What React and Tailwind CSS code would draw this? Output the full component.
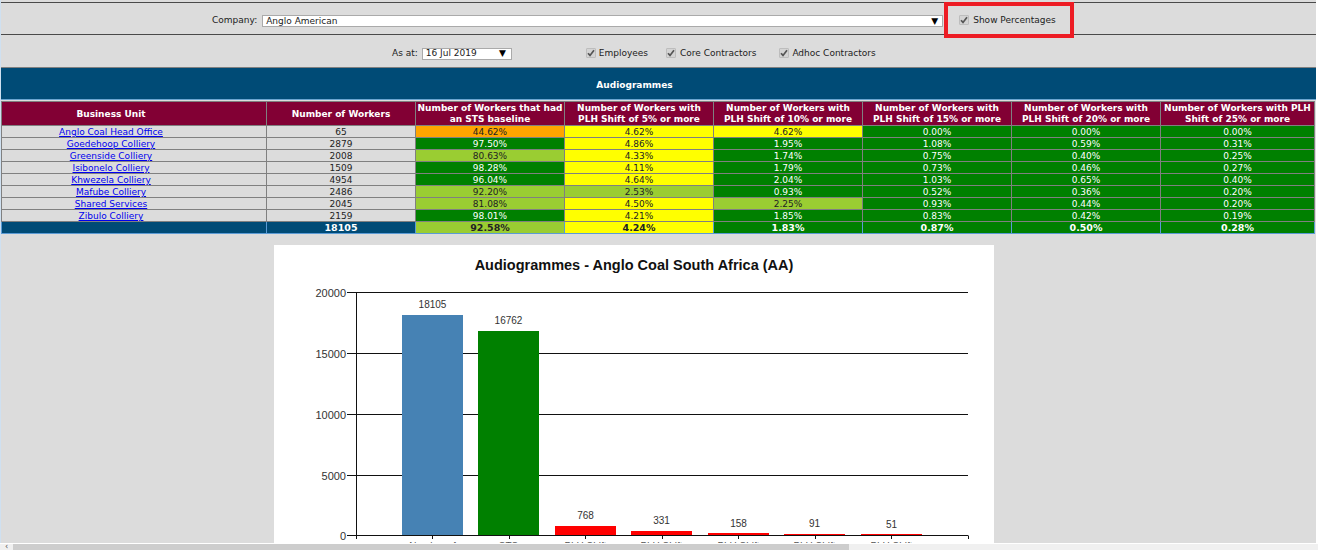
import React from 'react'

const GREEN = 'bg-[#008000] text-white'
const LIME = 'bg-[#9acd32] text-[#222]'
const YELLOW = 'bg-[#ffff00] text-[#222]'
const ORANGE = 'bg-[#ffa500] text-[#222]'

const headers = [
  { text: 'Business Unit', pad: 'pr-[46px]' },
  { text: 'Number of Workers', pad: '' },
  { text: 'Number of Workers that had an STS baseline', pad: '' },
  { text: 'Number of Workers with PLH Shift of 5% or more', pad: 'px-[6px]' },
  { text: 'Number of Workers with PLH Shift of 10% or more', pad: 'px-[6px]' },
  { text: 'Number of Workers with PLH Shift of 15% or more', pad: 'px-[6px]' },
  { text: 'Number of Workers with PLH Shift of 20% or more', pad: 'px-[6px]' },
  { text: 'Number of Workers with PLH Shift of 25% or more', pad: '' },
]

const colWidths = ['w-[265px]', 'w-[149px]', 'w-[149px]', 'w-[149px]', 'w-[149px]', 'w-[149px]', 'w-[149px]', 'w-[154px]']

const rows = [
  ['Anglo Coal Head Office', '65', ['44.62%', ORANGE], ['4.62%', YELLOW], ['4.62%', YELLOW], ['0.00%', GREEN], ['0.00%', GREEN], ['0.00%', GREEN]],
  ['Goedehoop Colliery', '2879', ['97.50%', GREEN], ['4.86%', YELLOW], ['1.95%', GREEN], ['1.08%', GREEN], ['0.59%', GREEN], ['0.31%', GREEN]],
  ['Greenside Colliery', '2008', ['80.63%', LIME], ['4.33%', YELLOW], ['1.74%', GREEN], ['0.75%', GREEN], ['0.40%', GREEN], ['0.25%', GREEN]],
  ['Isibonelo Colliery', '1509', ['98.28%', GREEN], ['4.11%', YELLOW], ['1.79%', GREEN], ['0.73%', GREEN], ['0.46%', GREEN], ['0.27%', GREEN]],
  ['Khwezela Colliery', '4954', ['96.04%', GREEN], ['4.64%', YELLOW], ['2.04%', GREEN], ['1.03%', GREEN], ['0.65%', GREEN], ['0.40%', GREEN]],
  ['Mafube Colliery', '2486', ['92.20%', LIME], ['2.53%', LIME], ['0.93%', GREEN], ['0.52%', GREEN], ['0.36%', GREEN], ['0.20%', GREEN]],
  ['Shared Services', '2045', ['81.08%', LIME], ['4.50%', YELLOW], ['2.25%', LIME], ['0.93%', GREEN], ['0.44%', GREEN], ['0.20%', GREEN]],
  ['Zibulo Colliery', '2159', ['98.01%', GREEN], ['4.21%', YELLOW], ['1.85%', GREEN], ['0.83%', GREEN], ['0.42%', GREEN], ['0.19%', GREEN]],
]

const totals = [['92.58%', LIME], ['4.24%', YELLOW], ['1.83%', GREEN], ['0.87%', GREEN], ['0.50%', GREEN], ['0.28%', GREEN]]

const bars = [
  { x: 128, top: 70, value: 18105, labelY: 63, fill: '#4682b4', label: 'Number of' },
  { x: 204, top: 86, value: 16762, labelY: 79, fill: '#008000', label: 'STS' },
  { x: 281, top: 281, value: 768, labelY: 274, fill: '#ff0000', label: 'PLH Shift' },
  { x: 357, top: 286, value: 331, labelY: 279, fill: '#ff0000', label: 'PLH Shift' },
  { x: 434, top: 288, value: 158, labelY: 282, fill: '#ff0000', label: 'PLH Shift' },
  { x: 510, top: 289, value: 91, labelY: 282, fill: '#ff0000', label: 'PLH Shift' },
  { x: 587, top: 289, value: 51, labelY: 283, fill: '#ff0000', label: 'PLH Shift' },
]

const gridLines = [
  { y: 47.5, label: '20000' },
  { y: 108.5, label: '15000' },
  { y: 169.5, label: '10000' },
  { y: 230.5, label: '5000' },
  { y: 290.5, label: '0' },
]

const ticks = [82.5, 158.5, 235.5, 311.5, 388.5, 464.5, 541.5, 617.5, 694.5]

const Checkbox = () => (
  <span className="-mt-[2px] flex h-[10px] w-[10px] items-center justify-center rounded-[1px] border border-[#bdbdbd] bg-[#d4d4d4]">
    <svg width="8" height="8" viewBox="0 0 8 8">
      <path d="M1 4.2 L3 6.4 L7 1.2" fill="none" stroke="#555" strokeWidth="1.7" />
    </svg>
  </span>
)

const Chart = () => (
  <div className="mt-[11px] ml-[273px] h-[298px] w-[720px] shrink-0 overflow-hidden bg-white">
    <svg width="720" height="298" style={{ fontFamily: '"Liberation Sans", Arial, sans-serif' }}>
      <text x="360" y="25" textAnchor="middle" fontSize="14.5" fontWeight="700" fill="#111">
        Audiogrammes - Anglo Coal South Africa (AA)
      </text>

      {gridLines.map((line) => (
        <g key={line.label}>
          <line x1="73" x2="694" y1={line.y} y2={line.y} stroke="#111" strokeWidth="1" />
          <text x="72" y={line.y + 4} textAnchor="end" fontSize="11" fill="#333">{line.label}</text>
        </g>
      ))}

      <line x1="82.5" x2="82.5" y1="47" y2="294" stroke="#111" strokeWidth="1" />
      {ticks.map((x) => (
        <line key={x} x1={x} x2={x} y1="290.5" y2="294" stroke="#111" strokeWidth="1" />
      ))}

      {bars.map((bar) => (
        <g key={bar.x}>
          <rect x={bar.x} y={bar.top} width="61" height={290 - bar.top} fill={bar.fill} />
          <text x={bar.x + 30.5} y={bar.labelY} textAnchor="middle" fontSize="10" fill="#333">{bar.value}</text>
          <text x={bar.x + 30.5} y="305" textAnchor="middle" fontSize="10" fill="#555">{bar.label}</text>
        </g>
      ))}
    </svg>
  </div>
)

export default function App() {
  return (
    <div
      className="relative flex h-[550px] w-[1318px] flex-col overflow-hidden bg-white text-[9px] text-[#222]"
      style={{ fontFamily: '"DejaVu Sans", Verdana, sans-serif' }}
    >
      <div className="flex min-h-0 w-[1316px] flex-1 flex-col overflow-hidden border-l border-[#cfe0f0] bg-[#dcdcdc]">
        {/* Filters */}
        <div className="mt-[2px] flex h-[33px] shrink-0 items-center border-y border-y-[#4a4a4a] pt-[5px] pl-[211px]">
          <span>Company:</span>
          <div className="ml-[5px] flex h-[12px] w-[681px] items-center justify-between border border-[#aaa] bg-white pr-[4px] pl-[3px] leading-none">
            <span>Anglo American</span>
            <span className="text-[9px] text-black">▼</span>
          </div>
          <div className="ml-[16px] flex items-center gap-[4px]">
            <Checkbox />
            <span>Show Percentages</span>
          </div>
        </div>

        <div className="flex h-[32px] shrink-0 items-center pt-[5px] pl-[391px]">
          <span>As at:</span>
          <div className="ml-[4px] flex h-[12px] w-[90px] items-center justify-between border border-[#aaa] bg-white pr-[5px] pl-[3px] leading-none">
            <span>16 Jul 2019</span>
            <span className="text-[9px] text-black">▼</span>
          </div>
          <div className="ml-[74px] flex items-center gap-[3px]"><Checkbox /><span>Employees</span></div>
          <div className="ml-[18px] flex items-center gap-[4px]"><Checkbox /><span>Core Contractors</span></div>
          <div className="ml-[23px] flex items-center gap-[3px]"><Checkbox /><span>Adhoc Contractors</span></div>
        </div>

        {/* Banner */}
        <div className="flex h-[33px] shrink-0 items-center justify-center border-t border-b border-t-[#808080] border-b-[#6aa5d0] bg-[#004b76] pt-[4px] pr-[48px] font-bold text-white">
          Audiogrammes
        </div>

        {/* Results table */}
        <table className="mt-[1px] w-[1313px] shrink-0 table-fixed border-collapse">
          <colgroup>
            {colWidths.map((width, i) => <col key={i} className={width} />)}
          </colgroup>
          <thead>
            <tr className="h-[23px]">
              {headers.map((header) => (
                <th key={header.text} className={`border border-[#808080] bg-[#820034] pt-px pb-0 text-center align-middle text-[9px] leading-[11px] font-bold text-white ${header.pad}`}>
                  {header.text}
                </th>
              ))}
            </tr>
          </thead>
          <tbody>
            {rows.map(([name, count, ...cells]) => (
              <tr key={name} className="h-[12px]">
                <td className="border border-[#808080] p-0 pt-px pr-[46px] text-center leading-[10px]">
                  <a href="#" className="text-[#0000ee] underline">{name}</a>
                </td>
                <td className="border border-[#808080] p-0 pt-px text-center leading-[10px]">{count}</td>
                {cells.map(([value, tone], i) => (
                  <td key={i} className={`border border-[#808080] p-0 pt-px text-center leading-[10px] ${tone}`}>{value}</td>
                ))}
              </tr>
            ))}
            <tr className="h-[12px] text-[9.5px] font-bold">
              <td className="border border-[#5b9bd5] bg-[#004b76] p-0" />
              <td className="border border-[#5b9bd5] bg-[#004b76] p-0 text-center leading-[11px] text-white">18105</td>
              {totals.map(([value, tone], i) => (
                <td key={i} className={`border border-[#5b9bd5] p-0 text-center leading-[11px] ${tone}`}>{value}</td>
              ))}
            </tr>
          </tbody>
        </table>

        <Chart />
      </div>

      {/* Horizontal scrollbar */}
      <div className="mt-px flex h-[6px] shrink-0 overflow-hidden bg-[#f0f0f0]">
        <div className="flex w-[13px] items-center justify-center text-[8px] leading-none text-[#555]">‹</div>
        <div className="h-full w-[836px] bg-[#cdcdcd]" />
      </div>

      {/* Callout drawn over the screenshot */}
      <div className="pointer-events-none absolute top-[2px] left-[944px] h-[36px] w-[130px] border-4 border-[#ed1c24]" />
    </div>
  )
}
